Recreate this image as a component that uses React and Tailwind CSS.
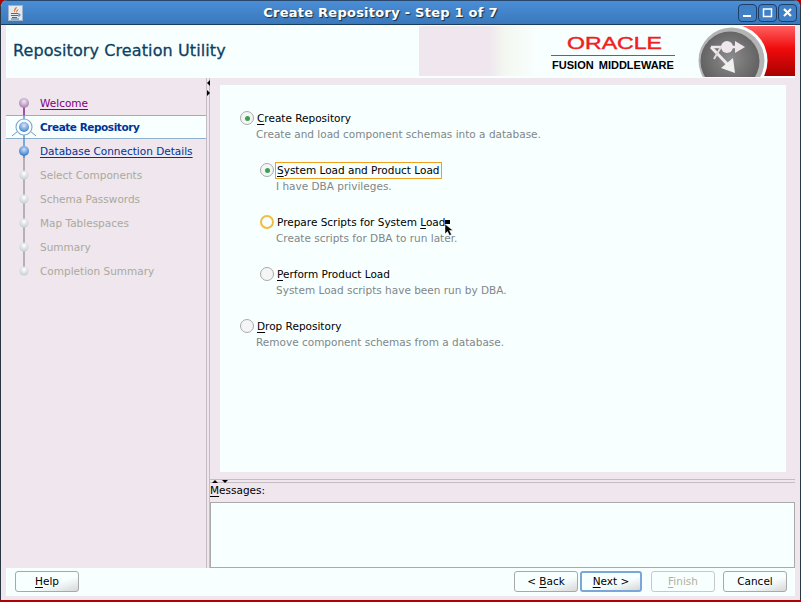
import React from 'react';

const dejavu = { fontFamily: '"DejaVu Sans", sans-serif' };

const STEPS = [
  { label: 'Welcome', kind: 'visited' },
  { label: 'Create Repository', kind: 'current' },
  { label: 'Database Connection Details', kind: 'next' },
  { label: 'Select Components', kind: 'off' },
  { label: 'Schema Passwords', kind: 'off' },
  { label: 'Map Tablespaces', kind: 'off' },
  { label: 'Summary', kind: 'off' },
  { label: 'Completion Summary', kind: 'off', last: true },
];

const LINE = { visited: '#800f86', current: '#4a90d0', next: '#9a9a9a', off: '#9a9a9a' };
const DOT = {
  visited: ['#f2e8f2', '#a27cae'],
  current: ['#dce9f8', '#3f7fd0'],
  next: ['#cfe0f6', '#2f74cc'],
  off: ['#ffffff', '#c4ccd0'],
};

const StepDot = ({ kind, first, last }) => {
  const id = `dot-${kind}`;
  return (
    <svg width="34" height="24" viewBox="0 0 34 24" className="shrink-0">
      <defs>
        <radialGradient id={id} cx="50%" cy="35%" r="65%">
          <stop offset="0%" stopColor={DOT[kind][0]} />
          <stop offset="100%" stopColor={DOT[kind][1]} />
        </radialGradient>
      </defs>
      {!first && <line x1="18" y1="0" x2="18" y2="12" stroke={kind === 'off' ? '#9a9a9a' : '#4a90d0'} strokeWidth="1.4" />}
      {!last && <line x1="18" y1="12" x2="18" y2="24" stroke={LINE[kind]} strokeWidth="1.4" />}
      {kind === 'next' && <line x1="18" y1="12" x2="18" y2="19" stroke="#4a90d0" strokeWidth="1.4" />}
      {kind === 'current' && (
        <>
          <path d="M12 16 L6 21 M24 16 L30 21" stroke="#6d9cc8" strokeWidth="1" fill="none" />
          <circle cx="18" cy="12" r="8" fill="#f8ffff" stroke="#8aa9c6" strokeWidth="1.2" />
        </>
      )}
      <circle cx="18" cy="12" r={kind === 'off' ? 4.5 : 5} fill={`url(#${id})`} />
    </svg>
  );
};

const StepRow = ({ step, index }) => {
  const isCurrent = step.kind === 'current';
  return (
    <div className={`flex h-[24px] items-center whitespace-nowrap ${isCurrent ? 'border-y border-[#8fb0cf] bg-[#f8ffff]' : ''}`}>
      <div className={isCurrent ? '-my-px' : ''}>
        <StepDot kind={step.kind} first={index === 0} last={step.last} />
      </div>
      {step.kind === 'visited' && <span className="text-[#800080] underline underline-offset-2">{step.label}</span>}
      {isCurrent && <span className="font-bold text-[#003399] tracking-[-0.45px]">{step.label}</span>}
      {step.kind === 'next' && <span className="text-[#003399] underline underline-offset-2">{step.label}</span>}
      {step.kind === 'off' && <span className="text-[#aaaa9c]">{step.label}</span>}
    </div>
  );
};

const Radio = ({ checked, hover }) => (
  <span
    className={`flex h-[14px] w-[14px] shrink-0 items-center justify-center rounded-full ${
      hover ? 'border-[2.5px] border-[#f2bc40] bg-[#f8ffff]' : 'border border-[#aaaaaa] bg-[#f4f6f6]'
    }`}
  >
    {checked && <span className="h-[5px] w-[5px] rounded-full bg-[#3f9f4f]" />}
  </span>
);

const Option = ({ mnemonic, rest, pre, desc, checked, hover, focus, indent }) => (
  <div className={`h-[52px] ${indent ? 'ml-[20px]' : ''}`}>
    <div className="flex h-[16px] items-center">
      <Radio checked={checked} hover={hover} />
      <span className={`ml-px flex h-[17px] items-center pl-px pr-px text-black ${focus ? 'border border-[#f0a020]' : 'border border-transparent'}`}>
        <span className="whitespace-pre">
          {pre}
          <u className="underline-offset-2">{mnemonic}</u>
          {rest}
        </span>
      </span>
    </div>
    <div className="ml-[16px] mt-px h-[15px] leading-[15px] text-[#7f8789]">{desc}</div>
  </div>
);

const Button = ({ m, pre, rest, disabled, focus, w = 'w-[64px]' }) => (
  <div
    className={`flex h-[21px] ${w} items-center justify-center rounded-[3px] border ${
      disabled
        ? 'border-[#c8c8c8] bg-[#f8ffff] text-[#b0b0a0]'
        : focus
          ? 'border-[2px] border-[#7aa6d8] bg-gradient-to-br from-[#f8ffff] from-60% to-[#d8d8d8] text-black'
          : 'border-[#a8a8a8] bg-gradient-to-br from-[#f8ffff] from-60% to-[#d8d8d8] text-black'
    }`}
  >
    <span className="whitespace-pre">
      {pre}
      <u className="underline-offset-2">{m}</u>
      {rest}
    </span>
  </div>
);

const JavaIcon = () => (
  <svg width="15" height="16" viewBox="0 0 15 16" className="shrink-0">
    <rect x="0.5" y="0.5" width="14" height="15" fill="#e4e9ee" stroke="#9fb4c8" />
    <path d="M8.500 1.500 C9.500 4 6 5 7 7.500 C5 6 6 4 8.500 1.500 Z M10.500 4 C10.500 6 8.500 6 9 8 C7.500 7 8 5 10.500 4 Z" fill="#e8702a" />
    <path d="M3 8.500 H10 M3 10.500 H10 M4 12.500 H9 M3 14 H11 M10 9 C13 9 13 11 10 11" stroke="#3f6f9f" strokeWidth="1" fill="none" />
  </svg>
);

const WinButton = ({ children }) => (
  <div className="flex h-[18px] w-[19px] items-center justify-center rounded-[4px] border border-[#1f3f66] bg-[#3f80c6]">
    <svg width="13" height="13" viewBox="0 0 13 13">{children}</svg>
  </div>
);

const OracleLogo = () => (
  <div className="flex w-[124px] flex-col items-stretch pt-[10px]">
    <svg width="124" height="16" viewBox="0 0 124 16" className="block">
      <text x="16" y="13" fontSize="16" textLength="95" lengthAdjust="spacingAndGlyphs" fill="#f02020" stroke="#f02020" strokeWidth="0.4" fontFamily="Liberation Sans, sans-serif">ORACLE</text>
    </svg>
    <div className="mt-[3px] h-px bg-[#666666]" />
    <div className="mt-[3px] whitespace-nowrap text-center text-[11px] font-bold leading-[13px] text-black [font-family:'Liberation_Sans',sans-serif] [word-spacing:2px]">
      FUSION MIDDLEWARE
    </div>
  </div>
);

const Emblem = () => (
  <svg width="106" height="51" viewBox="0 0 106 51" className="block shrink-0">
    <defs>
      <linearGradient id="redbands" x1="0" y1="0" x2="0" y2="1">
        <stop offset="0%" stopColor="#ff6060" />
        <stop offset="45%" stopColor="#f00c0c" />
        <stop offset="100%" stopColor="#a80000" />
      </linearGradient>
      <radialGradient id="disc" cx="50%" cy="45%" r="60%">
        <stop offset="0%" stopColor="#8c8c8c" />
        <stop offset="100%" stopColor="#5a5a5a" />
      </radialGradient>
    </defs>
    <rect x="46" y="0" width="60" height="50" fill="url(#redbands)" />
    <circle cx="42.500" cy="34.500" r="36" fill="#f8ffff" />
    <circle cx="42.500" cy="34.500" r="33" fill="#b4b4b4" />
    <circle cx="41" cy="35" r="29.500" fill="url(#disc)" />
    <path d="M22 21 H48" stroke="#efe6ee" strokeWidth="2.500" />
    <path d="M46 15 L56 21 L46 27 Z" fill="#efe6ee" />
    <circle cx="38" cy="21" r="6" fill="#efe6ee" />
    <path d="M22 21 L42 42" stroke="#efe6ee" strokeWidth="3" />
    <path d="M32 21 L25 33" stroke="#dcdcdc" strokeWidth="2" />
    <path d="M46 47 L32 42 L44 32 Z" fill="#f0f0f0" />
  </svg>
);

const Cursor = () => (
  <svg width="10" height="16" viewBox="0 0 10 16" className="absolute left-[444px] top-[220px]">
    <rect x="1" y="0" width="5" height="4" fill="#000" />
    <path d="M1 4 L1 14 L3.500 11.500 L5.500 15.500 L7.500 14.500 L5.500 10.500 L9 10.500 Z" fill="#000" stroke="#fff" strokeWidth="0.5" />
  </svg>
);

export default function App() {
  return (
    <div className="relative flex h-[602px] w-[801px] flex-col overflow-hidden bg-[#b00000] text-[10.5px] leading-none" style={dejavu}>
      <div className="flex h-[600px] flex-col overflow-hidden rounded-t-[7px] border-x border-[#2a3844] bg-[#efe6ee]">
        {/* Title bar */}
        <div className="flex h-[25px] shrink-0 items-center border-y border-b-[#1c3c5c] border-t-[#27486c] bg-gradient-to-b from-[#4a8ed6] to-[#3a78bc] pl-[7px] pr-[3px]">
          <JavaIcon />
          <div className="flex-1 text-center text-[13px] font-bold tracking-[0.25px] text-white [text-shadow:1px_1px_1px_#1c2c3c]">
            Create Repository - Step 1 of 7
          </div>
          <div className="flex gap-[1px]">
            <WinButton><path d="M2 10 H10" stroke="#fff" strokeWidth="2" /></WinButton>
            <WinButton><path d="M2.500 3 H10.500 V10.500 H2.500 Z" stroke="#fff" strokeWidth="1.500" fill="none" /></WinButton>
            <WinButton><path d="M3 3 L10 10 M10 3 L3 10" stroke="#fff" strokeWidth="2.200" /></WinButton>
          </div>
        </div>

        <div className="flex min-h-0 flex-1 flex-col px-[5px] pb-[4px]">
          {/* Header */}
          <div className="flex h-[53px] shrink-0 bg-[#f8ffff] pt-px">
            <div className="flex w-[414px] items-center pl-[7px] pb-[2px] text-[16px] tracking-[0.1px] text-[#0d3f63] [-webkit-text-stroke:0.3px_#0d3f63]">
              Repository Creation Utility
            </div>
            <div className="mb-[2px] w-[120px] bg-gradient-to-r from-[#efe6ee] from-58% via-[#f4f8f1] via-72% to-[#f8ffff]" />
            <div className="ml-[12px]"><OracleLogo /></div>
            <div className="ml-[14px]"><Emblem /></div>
          </div>

          {/* Middle */}
          <div className="flex min-h-0 flex-1">
            <aside className="w-[200px] shrink-0 pt-[13px]">
              {STEPS.map((step, i) => (
                <StepRow key={step.label} step={step} index={i} />
              ))}
            </aside>

            {/* Splitter */}
            <div className="relative w-[4px] shrink-0 border-x border-[#c4bec4]">
              <span className="absolute left-0 top-[2px] h-0 w-0 border-y-[3px] border-r-[3px] border-y-transparent border-r-black" />
              <span className="absolute left-0 top-[12px] h-0 w-0 border-y-[3px] border-l-[3px] border-y-transparent border-l-black" />
            </div>

            <div className="flex min-w-0 flex-1 flex-col">
              <div className="ml-[10px] mr-[9px] mt-[7px] h-[387px] shrink-0 bg-[#f8ffff] pl-[20px] pt-[25px]">
                <Option mnemonic="C" rest="reate Repository" desc="Create and load component schemas into a database." checked />
                <Option indent mnemonic="S" rest="ystem Load and Product Load" desc="I have DBA privileges." checked focus />
                <Option indent pre="Prepare Scripts for System " mnemonic="L" rest="oad" desc="Create scripts for DBA to run later." hover />
                <Option indent mnemonic="P" rest="erform Product Load" desc="System Load scripts have been run by DBA." />
                <Option mnemonic="D" rest="rop Repository" desc="Remove component schemas from a database." />
              </div>

              {/* Horizontal splitter */}
              <div className="relative mt-[7px] h-[4px] shrink-0 border-y border-[#c4bec4]">
                <span className="absolute left-[2px] top-0 h-0 w-0 border-x-[3px] border-b-[3px] border-x-transparent border-b-black" />
                <span className="absolute left-[12px] top-0 h-0 w-0 border-x-[3px] border-t-[3px] border-x-transparent border-t-black" />
              </div>

              <div className="h-[19px] shrink-0 pt-[2px] text-black">
                <u className="underline-offset-2">M</u>essages:
              </div>
              <div className="flex-1 border border-[#aaaaaa] bg-[#f8ffff]" />
            </div>
          </div>

          {/* Footer */}
          <div className="flex h-[28px] shrink-0 items-start justify-between bg-[#f8ffff] pl-[9px] pr-[8px] pt-[3px]">
            <Button m="H" rest="elp" />
            <div className="flex">
              <Button pre="< " m="B" rest="ack" />
              <div className="ml-[2px]"><Button m="N" rest="ext >" focus w="w-[62px]" /></div>
              <div className="ml-[9px]"><Button m="F" rest="inish" disabled /></div>
              <div className="ml-[8px]"><Button m="" rest="Cancel" /></div>
            </div>
          </div>
        </div>
      </div>
      <Cursor />
    </div>
  );
}
